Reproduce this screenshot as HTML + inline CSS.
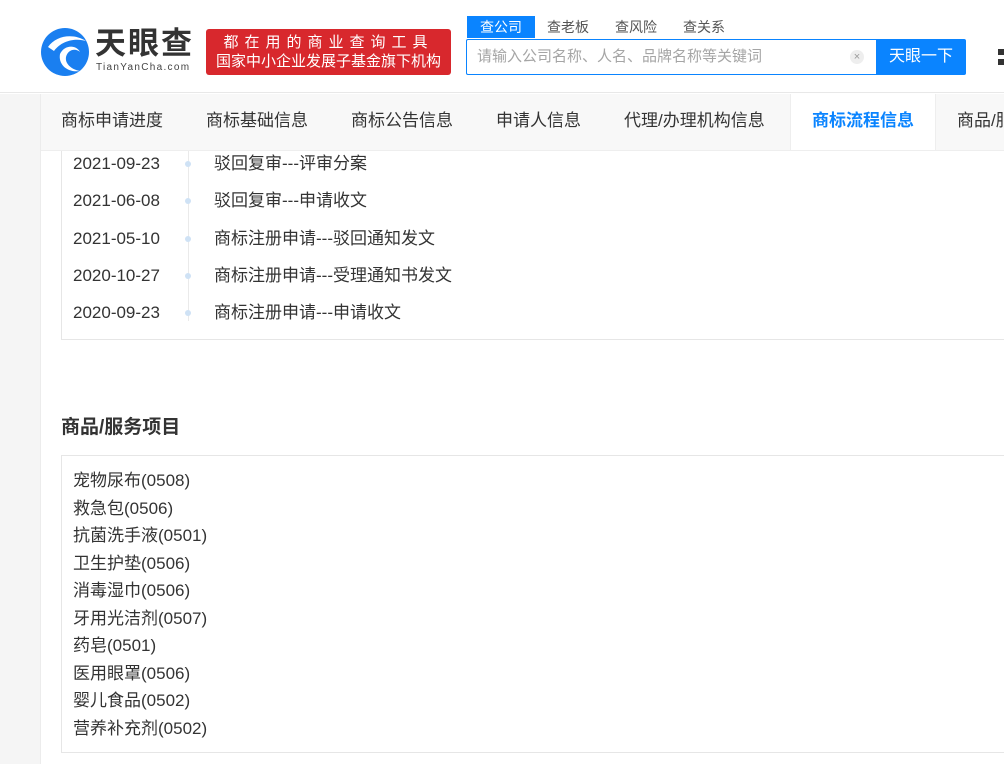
<!DOCTYPE html>
<html><head><meta charset="utf-8"><style>
*{margin:0;padding:0;box-sizing:border-box}
html,body{width:1004px;height:764px;overflow:hidden}
body{background:#fff;font-family:"Liberation Sans","Noto Sans CJK SC",sans-serif;color:#333;position:relative}
.abs{position:absolute}
.hdr{left:0;top:0;width:1004px;height:93px;background:#fff;border-bottom:1px solid #e8e8e8;overflow:hidden}
.left{left:0;top:94px;width:41px;height:670px;background:#f5f5f5;border-right:1px solid #ececec}
.tabs{left:41px;top:94px;width:963px;height:57px;background:#f8f8f8;border-bottom:1px solid #eee;overflow:hidden}
.tab{position:absolute;top:0;height:56px;line-height:54px;font-size:17px;color:#333;white-space:nowrap}
.box{border:1px solid #e6e6e6;border-right:none}
.row{position:absolute;font-size:17px;line-height:22px;height:22px;white-space:nowrap}
.dot{position:absolute;width:6px;height:6px;border-radius:50%;background:#cfe2f5}
</style></head><body>
<div class="abs hdr">
  <svg class="abs" style="left:40px;top:27px" width="50" height="50" viewBox="0 0 50 50">
    <circle cx="25" cy="25" r="24" fill="#1a7ff0"/>
    <path d="M8 20 C16 8 34 6 46 14 C36 11 22 13 14 24 Z" fill="#fff"/>
    <path d="M20 27 C24 18 36 17 40 25 C36 21 28 22 26 30 C25 36 30 42 40 44 C28 46 18 38 20 27Z" fill="#fff"/>
  </svg>
  <div class="abs" style="left:95px;top:26px;font-size:31px;font-weight:bold;color:#333;letter-spacing:2px;line-height:36px">天眼查</div>
  <div class="abs" style="left:96px;top:62px;font-size:10px;color:#444;letter-spacing:1.3px">TianYanCha.com</div>
  <div class="abs" style="left:206px;top:29px;width:245px;height:46px;background:#d8282d;border-radius:3px;color:#fff;text-align:center">
    <div style="font-size:15px;line-height:19px;margin-top:4px;letter-spacing:6px">都在用的商业查询工具</div>
    <div style="font-size:15px;line-height:20px">国家中小企业发展子基金旗下机构</div>
  </div>
  <div class="abs" style="left:467px;top:16px;width:68px;height:22px;background:#0a84ff;color:#fff;font-size:14px;text-align:center;line-height:22px">查公司</div>
  <div class="abs" style="left:547px;top:16px;font-size:14px;line-height:22px;color:#555;word-spacing:0"><span>查老板</span><span style="margin-left:26px">查风险</span><span style="margin-left:26px">查关系</span></div>
  <div class="abs" style="left:466px;top:39px;width:410px;height:36px;border:1px solid #0a84ff;border-right:none;border-radius:2px 0 0 2px"></div>
  <div class="abs" style="left:477px;top:39px;line-height:36px;font-size:15px;color:#a5a5a5">请输入公司名称、人名、品牌名称等关键词</div>
  <div class="abs" style="left:850px;top:50px;width:14px;height:14px;border-radius:50%;background:#eee;color:#999;font-size:11px;line-height:14px;text-align:center">×</div>
  <div class="abs" style="left:876px;top:39px;width:90px;height:36px;background:#0a84ff;color:#fff;font-size:16px;line-height:36px;text-align:center;border-radius:0 2px 2px 0">天眼一下</div>
  <div class="abs" style="left:998px;top:49px;width:6px;height:6px;background:#333"></div>
  <div class="abs" style="left:998px;top:59px;width:6px;height:6px;background:#333"></div>
</div>
<div class="abs left"></div>
<div class="abs tabs">
  <div class="tab" style="left:20px">商标申请进度</div>
  <div class="tab" style="left:165px">商标基础信息</div>
  <div class="tab" style="left:310px">商标公告信息</div>
  <div class="tab" style="left:455px">申请人信息</div>
  <div class="tab" style="left:583px">代理/办理机构信息</div>
  <div class="tab" style="left:749px;width:146px;background:#fff;text-align:center;color:#0a84ff;font-weight:bold;border-left:1px solid #eee;border-right:1px solid #eee;height:57px">商标流程信息</div>
  <div class="tab" style="left:916px">商品/服务项目</div>
</div>
<div class="abs box" style="left:61px;top:151px;width:943px;height:189px;border-top:none"></div>
<div class="abs" style="left:188px;top:151px;width:1px;height:170px;background:#eaeaea"></div>
<div class="row" style="left:73px;top:153px">2021-09-23</div><div class="dot" style="left:185px;top:161px"></div><div class="row" style="left:214px;top:153px">驳回复审---评审分案</div>
<div class="row" style="left:73px;top:190px">2021-06-08</div><div class="dot" style="left:185px;top:198px"></div><div class="row" style="left:214px;top:190px">驳回复审---申请收文</div>
<div class="row" style="left:73px;top:228px">2021-05-10</div><div class="dot" style="left:185px;top:236px"></div><div class="row" style="left:214px;top:228px">商标注册申请---驳回通知发文</div>
<div class="row" style="left:73px;top:265px">2020-10-27</div><div class="dot" style="left:185px;top:273px"></div><div class="row" style="left:214px;top:265px">商标注册申请---受理通知书发文</div>
<div class="row" style="left:73px;top:302px">2020-09-23</div><div class="dot" style="left:185px;top:310px"></div><div class="row" style="left:214px;top:302px">商标注册申请---申请收文</div>
<div class="abs" style="left:61px;top:412px;font-size:19px;font-weight:bold;color:#333">商品/服务项目</div>
<div class="abs box" style="left:61px;top:455px;width:943px;height:298px"></div>
<div class="abs" style="left:73px;top:467px;font-size:17px;line-height:27.5px;color:#333">
宠物尿布(0508)<br>救急包(0506)<br>抗菌洗手液(0501)<br>卫生护垫(0506)<br>消毒湿巾(0506)<br>牙用光洁剂(0507)<br>药皂(0501)<br>医用眼罩(0506)<br>婴儿食品(0502)<br>营养补充剂(0502)
</div>
</body></html>
